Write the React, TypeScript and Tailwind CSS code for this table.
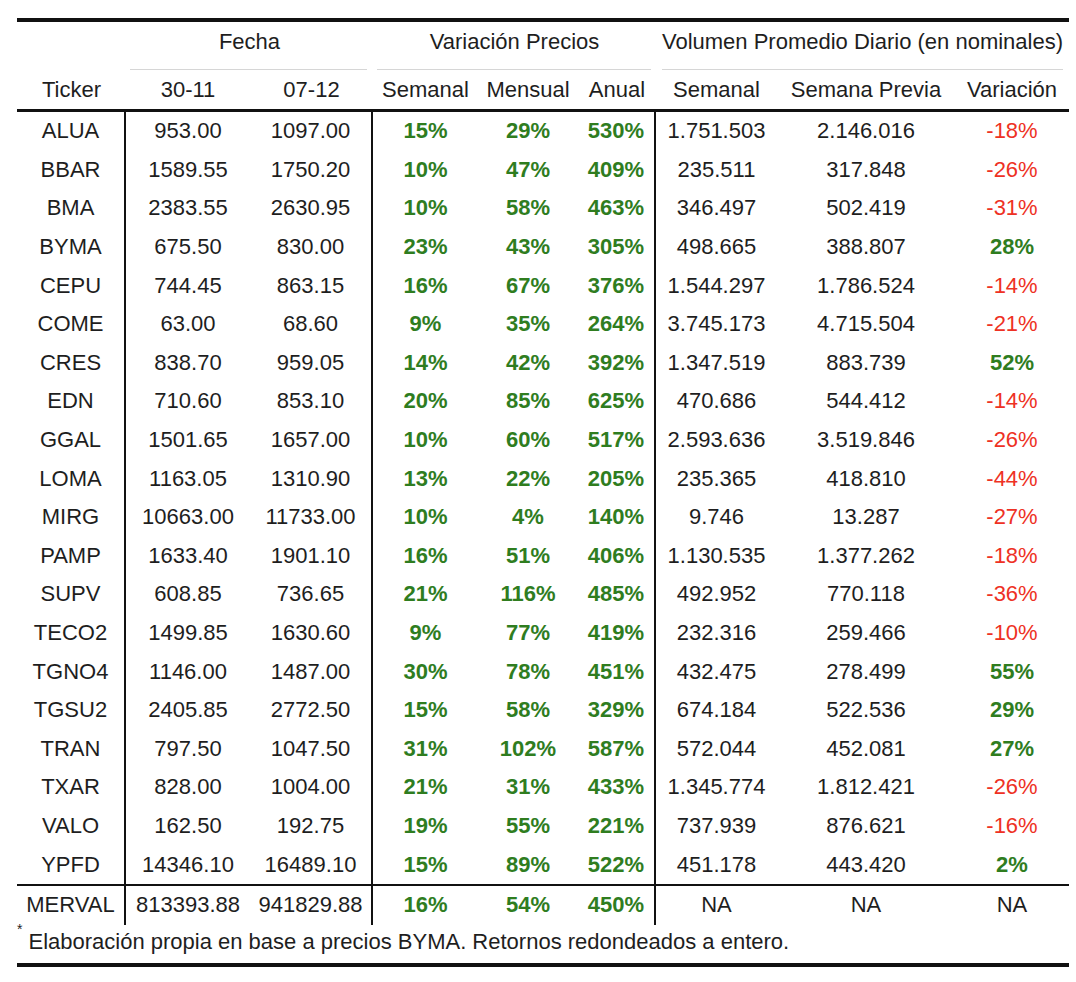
import React from "react";

type Row = {
  t: string;
  a: string;
  b: string;
  s: string;
  m: string;
  y: string;
  vs: string;
  vp: string;
  v: string;
};

const rows: Row[] = [
  { t: "ALUA", a: "953.00", b: "1097.00", s: "15%", m: "29%", y: "530%", vs: "1.751.503", vp: "2.146.016", v: "-18%" },
  { t: "BBAR", a: "1589.55", b: "1750.20", s: "10%", m: "47%", y: "409%", vs: "235.511", vp: "317.848", v: "-26%" },
  { t: "BMA", a: "2383.55", b: "2630.95", s: "10%", m: "58%", y: "463%", vs: "346.497", vp: "502.419", v: "-31%" },
  { t: "BYMA", a: "675.50", b: "830.00", s: "23%", m: "43%", y: "305%", vs: "498.665", vp: "388.807", v: "28%" },
  { t: "CEPU", a: "744.45", b: "863.15", s: "16%", m: "67%", y: "376%", vs: "1.544.297", vp: "1.786.524", v: "-14%" },
  { t: "COME", a: "63.00", b: "68.60", s: "9%", m: "35%", y: "264%", vs: "3.745.173", vp: "4.715.504", v: "-21%" },
  { t: "CRES", a: "838.70", b: "959.05", s: "14%", m: "42%", y: "392%", vs: "1.347.519", vp: "883.739", v: "52%" },
  { t: "EDN", a: "710.60", b: "853.10", s: "20%", m: "85%", y: "625%", vs: "470.686", vp: "544.412", v: "-14%" },
  { t: "GGAL", a: "1501.65", b: "1657.00", s: "10%", m: "60%", y: "517%", vs: "2.593.636", vp: "3.519.846", v: "-26%" },
  { t: "LOMA", a: "1163.05", b: "1310.90", s: "13%", m: "22%", y: "205%", vs: "235.365", vp: "418.810", v: "-44%" },
  { t: "MIRG", a: "10663.00", b: "11733.00", s: "10%", m: "4%", y: "140%", vs: "9.746", vp: "13.287", v: "-27%" },
  { t: "PAMP", a: "1633.40", b: "1901.10", s: "16%", m: "51%", y: "406%", vs: "1.130.535", vp: "1.377.262", v: "-18%" },
  { t: "SUPV", a: "608.85", b: "736.65", s: "21%", m: "116%", y: "485%", vs: "492.952", vp: "770.118", v: "-36%" },
  { t: "TECO2", a: "1499.85", b: "1630.60", s: "9%", m: "77%", y: "419%", vs: "232.316", vp: "259.466", v: "-10%" },
  { t: "TGNO4", a: "1146.00", b: "1487.00", s: "30%", m: "78%", y: "451%", vs: "432.475", vp: "278.499", v: "55%" },
  { t: "TGSU2", a: "2405.85", b: "2772.50", s: "15%", m: "58%", y: "329%", vs: "674.184", vp: "522.536", v: "29%" },
  { t: "TRAN", a: "797.50", b: "1047.50", s: "31%", m: "102%", y: "587%", vs: "572.044", vp: "452.081", v: "27%" },
  { t: "TXAR", a: "828.00", b: "1004.00", s: "21%", m: "31%", y: "433%", vs: "1.345.774", vp: "1.812.421", v: "-26%" },
  { t: "VALO", a: "162.50", b: "192.75", s: "19%", m: "55%", y: "221%", vs: "737.939", vp: "876.621", v: "-16%" },
  { t: "YPFD", a: "14346.10", b: "16489.10", s: "15%", m: "89%", y: "522%", vs: "451.178", vp: "443.420", v: "2%" },
];

const green = "font-bold text-[#2f7d1f]";

function VarCell({ v }: { v: string }) {
  const neg = v.startsWith("-");
  return (
    <div className={`w-[114px] text-center ${neg ? "text-[#ee3124]" : green}`}>{v}</div>
  );
}

function DataRow({ r, last }: { r: Row; last?: boolean }) {
  return (
    <div className={`flex items-center ${last ? "h-[39px]" : "h-[38.6px]"}`}>
      <div className="flex h-full w-[109px] items-center justify-center border-r-2 border-[#111]">{r.t}</div>
      <div className="w-[124px] text-center">{r.a}</div>
      <div className="flex h-full w-[123px] items-center justify-center border-r-2 border-[#111]">{r.b}</div>
      <div className={`w-[105px] text-center ${green}`}>{r.s}</div>
      <div className={`w-[100px] text-center ${green}`}>{r.m}</div>
      <div className={`flex h-full w-[78px] items-center justify-center border-r-2 border-[#111] ${green}`}>{r.y}</div>
      <div className="w-[121px] text-center">{r.vs}</div>
      <div className="w-[178px] text-center">{r.vp}</div>
      {r.v === "NA" ? <div className="w-[114px] text-center">NA</div> : <VarCell v={r.v} />}
    </div>
  );
}

export default function App() {
  return (
    <div className="min-h-[982px] w-[1076px] bg-white px-[17px] pt-[18px] font-['Liberation_Sans',Arial,sans-serif] text-[22px] leading-[26px] text-[#1e1e1e]">
      <div className="w-[1052px] border-t-4 border-[#111]">
        {/* group headers */}
        <div className="flex h-[48px]">
          <div className="w-[109px]" />
          <div className="flex w-[247px] flex-col">
            <div className="pt-[7px] text-center">Fecha</div>
            <div className="mt-auto mr-[6px] ml-[4px] border-b border-[#d6d6d6]" />
          </div>
          <div className="flex w-[283px] flex-col">
            <div className="pt-[7px] text-center">Variación Precios</div>
            <div className="mt-auto mr-[5px] ml-[4px] border-b border-[#d6d6d6]" />
          </div>
          <div className="flex w-[413px] flex-col">
            <div className="pt-[7px] text-center">Volumen Promedio Diario (en nominales)</div>
            <div className="mt-auto mr-[6px] ml-[6px] border-b border-[#d6d6d6]" />
          </div>
        </div>
        {/* column headers */}
        <div className="flex h-[42px] items-center border-b-[3px] border-[#111]">
          <div className="w-[109px] text-center">Ticker</div>
          <div className="w-[124px] text-center">30-11</div>
          <div className="w-[123px] text-center">07-12</div>
          <div className="w-[105px] text-center">Semanal</div>
          <div className="w-[100px] text-center">Mensual</div>
          <div className="w-[78px] text-center">Anual</div>
          <div className="w-[121px] text-center">Semanal</div>
          <div className="w-[178px] text-center">Semana Previa</div>
          <div className="w-[114px] text-center">Variación</div>
        </div>
        <div className="border-b-2 border-[#111]">
          {rows.map((r) => (
            <DataRow key={r.t} r={r} />
          ))}
        </div>
        <DataRow
          last
          r={{ t: "MERVAL", a: "813393.88", b: "941829.88", s: "16%", m: "54%", y: "450%", vs: "NA", vp: "NA", v: "NA" }}
        />
        <div className="flex h-[42px] items-center border-b-4 border-[#111] pb-[4px]">
          <sup className="mt-[-12px] text-[14px] leading-none">*</sup>
          <span className="ml-[6px]">Elaboración propia en base a precios BYMA. Retornos redondeados a entero.</span>
        </div>
      </div>
    </div>
  );
}
